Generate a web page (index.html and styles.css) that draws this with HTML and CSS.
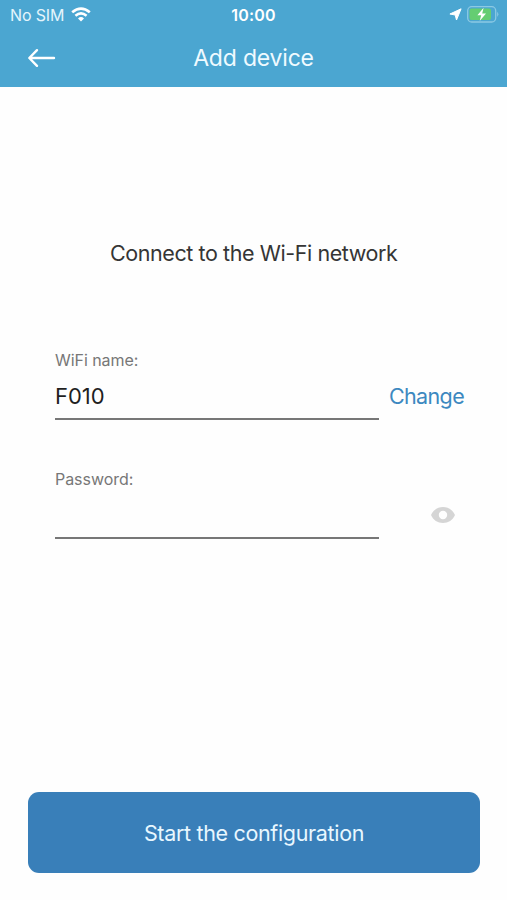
FILE: index.html
```html
<!DOCTYPE html>
<html lang="en">
<head>
<meta charset="utf-8">
<title>Add device</title>
<link rel="stylesheet" href="styles.css">
</head>
<body>
<div class="screen">
  <header class="header">
    <div class="status">
      <div class="status-left">
        <span class="carrier">No SIM</span>
        <svg class="wifi" width="20" height="15" viewBox="0 0 20 15">
          <path d="M1.200 5.300Q10 -2 18.800 5.300" fill="none" stroke="#fff" stroke-width="2.700"/>
          <path d="M4.400 8.700Q10 4 15.600 8.700" fill="none" stroke="#fff" stroke-width="2.500"/>
          <path d="M7 11.500Q10 8.700 13 11.500L10 14.600Z" fill="#fff"/>
        </svg>
      </div>
      <span class="clock">10:00</span>
      <div class="status-right">
        <svg width="13" height="13" viewBox="0 0 13 13"><path d="M12.100 .8L7.500 12L6.200 7L.9 6Z" fill="#fff" stroke="#fff" stroke-width="1" stroke-linejoin="round"/></svg>
        <svg width="32" height="17" viewBox="0 0 32 17">
          <rect x=".7" y=".7" width="28" height="15.300" rx="4" fill="none" stroke="#8cc9e4" stroke-width="1.300"/>
          <rect x="2.500" y="2.600" width="21.500" height="11.500" rx="2" fill="#65cd72"/>
          <path d="M30.200 5.800Q32.500 8.300 30.200 10.900Z" fill="#8cc9e4"/>
          <path d="M16.600 1.800L10.400 9.200H14.200L12.700 15L19 7.600H15.200Z" fill="#fff"/>
        </svg>
      </div>
    </div>
    <nav class="nav">
      <svg class="back" width="30" height="22" viewBox="0 0 30 22"><path d="M27 11H2.500M10 3.200L2.300 11L10 18.800" fill="none" stroke="#fff" stroke-width="2.400" stroke-linecap="round" stroke-linejoin="round"/></svg>
      <h1 class="title">Add device</h1>
      <span></span>
    </nav>
  </header>
  <main class="main">
    <h2 class="heading">Connect to the Wi-Fi network</h2>
    <div class="field">
      <div class="label">WiFi name:</div>
      <div class="row">
        <div class="value">F010</div>
        <a class="change">Change</a>
      </div>
    </div>
    <div class="field">
      <div class="label">Password:</div>
      <div class="row">
        <div class="value"></div>
        <svg class="eye" width="26" height="18" viewBox="0 0 26 18"><path fill="#d5d5d5" fill-rule="evenodd" d="M1 9C3.200 3.800 7.700 1 13 1S22.800 3.800 25 9C22.800 14.200 18.300 17 13 17S3.200 14.200 1 9ZM13 4.800A4.200 4.200 0 1 0 13 13.200A4.200 4.200 0 1 0 13 4.800Z"/></svg>
      </div>
    </div>
  </main>
  <button class="start">Start the configuration</button>
</div>
</body>
</html>
```
FILE: styles.css
```css
* {
  box-sizing: border-box;
}

body {
  margin: 0;
  background: #fefefe;
  font-family: Inter, "Liberation Sans", sans-serif;
}

.screen {
  display: flex;
  flex-direction: column;
  width: 507px;
  height: 900px;
  padding-bottom: 27px;
}

.header {
  height: 87px;
  background: #4ba6d1;
  color: #fff;
}

.status {
  display: grid;
  grid-template-columns: 1fr auto 1fr;
  align-items: center;
  height: 29px;
  padding: 0 8px 0 10px;
}

.status-left,
.status-right {
  display: flex;
  align-items: center;
}

.status-left {
  gap: 7px;
}

.status-right {
  justify-content: flex-end;
  gap: 5px;
}

.carrier {
  font-size: 16px;
  letter-spacing: -0.15px;
  color: #e4f5fc;
}

.clock {
  margin-right: 2px;
  font-size: 16px;
  font-weight: 600;
  letter-spacing: 0.2px;
}

.nav {
  display: grid;
  grid-template-columns: 1fr auto 1fr;
  align-items: center;
  height: 58px;
  padding: 0 26px;
}

.back {
  margin: 0 0 1px 1px;
}

.title {
  margin: 0;
  font-size: 23px;
  font-weight: 400;
  line-height: 28px;
  letter-spacing: -0.2px;
  color: #effaff;
}

.main {
  flex: 1;
  padding: 151px 43px 0 55px;
}

.heading {
  margin: 0 0 81px 55px;
  font-size: 21.5px;
  font-weight: 400;
  line-height: 30px;
  letter-spacing: -0.42px;
  color: #353535;
  white-space: nowrap;
}

.field {
  height: 118.5px;
}

.label {
  font-size: 16px;
  line-height: 22px;
  letter-spacing: -0.05px;
  color: #777;
}

.row {
  display: flex;
  align-items: center;
  height: 49px;
}

.value {
  flex: none;
  width: 324px;
  height: 49px;
  border-bottom: 2px solid #777;
  font-size: 22px;
  line-height: 50px;
  color: #1f1f1f;
}

.change {
  margin-left: 10px;
  font-size: 21.5px;
  line-height: 30px;
  letter-spacing: -0.65px;
  color: #3c88c0;
}

.eye {
  margin: 2px 0 0 51px;
}

.start {
  height: 81px;
  margin: 0 27px 0 28px;
  padding: 0;
  border: 0;
  border-radius: 11px;
  background: #397fb9;
  color: #e8f7ff;
  font-family: inherit;
  font-size: 21.5px;
  letter-spacing: -0.33px;
}
```
